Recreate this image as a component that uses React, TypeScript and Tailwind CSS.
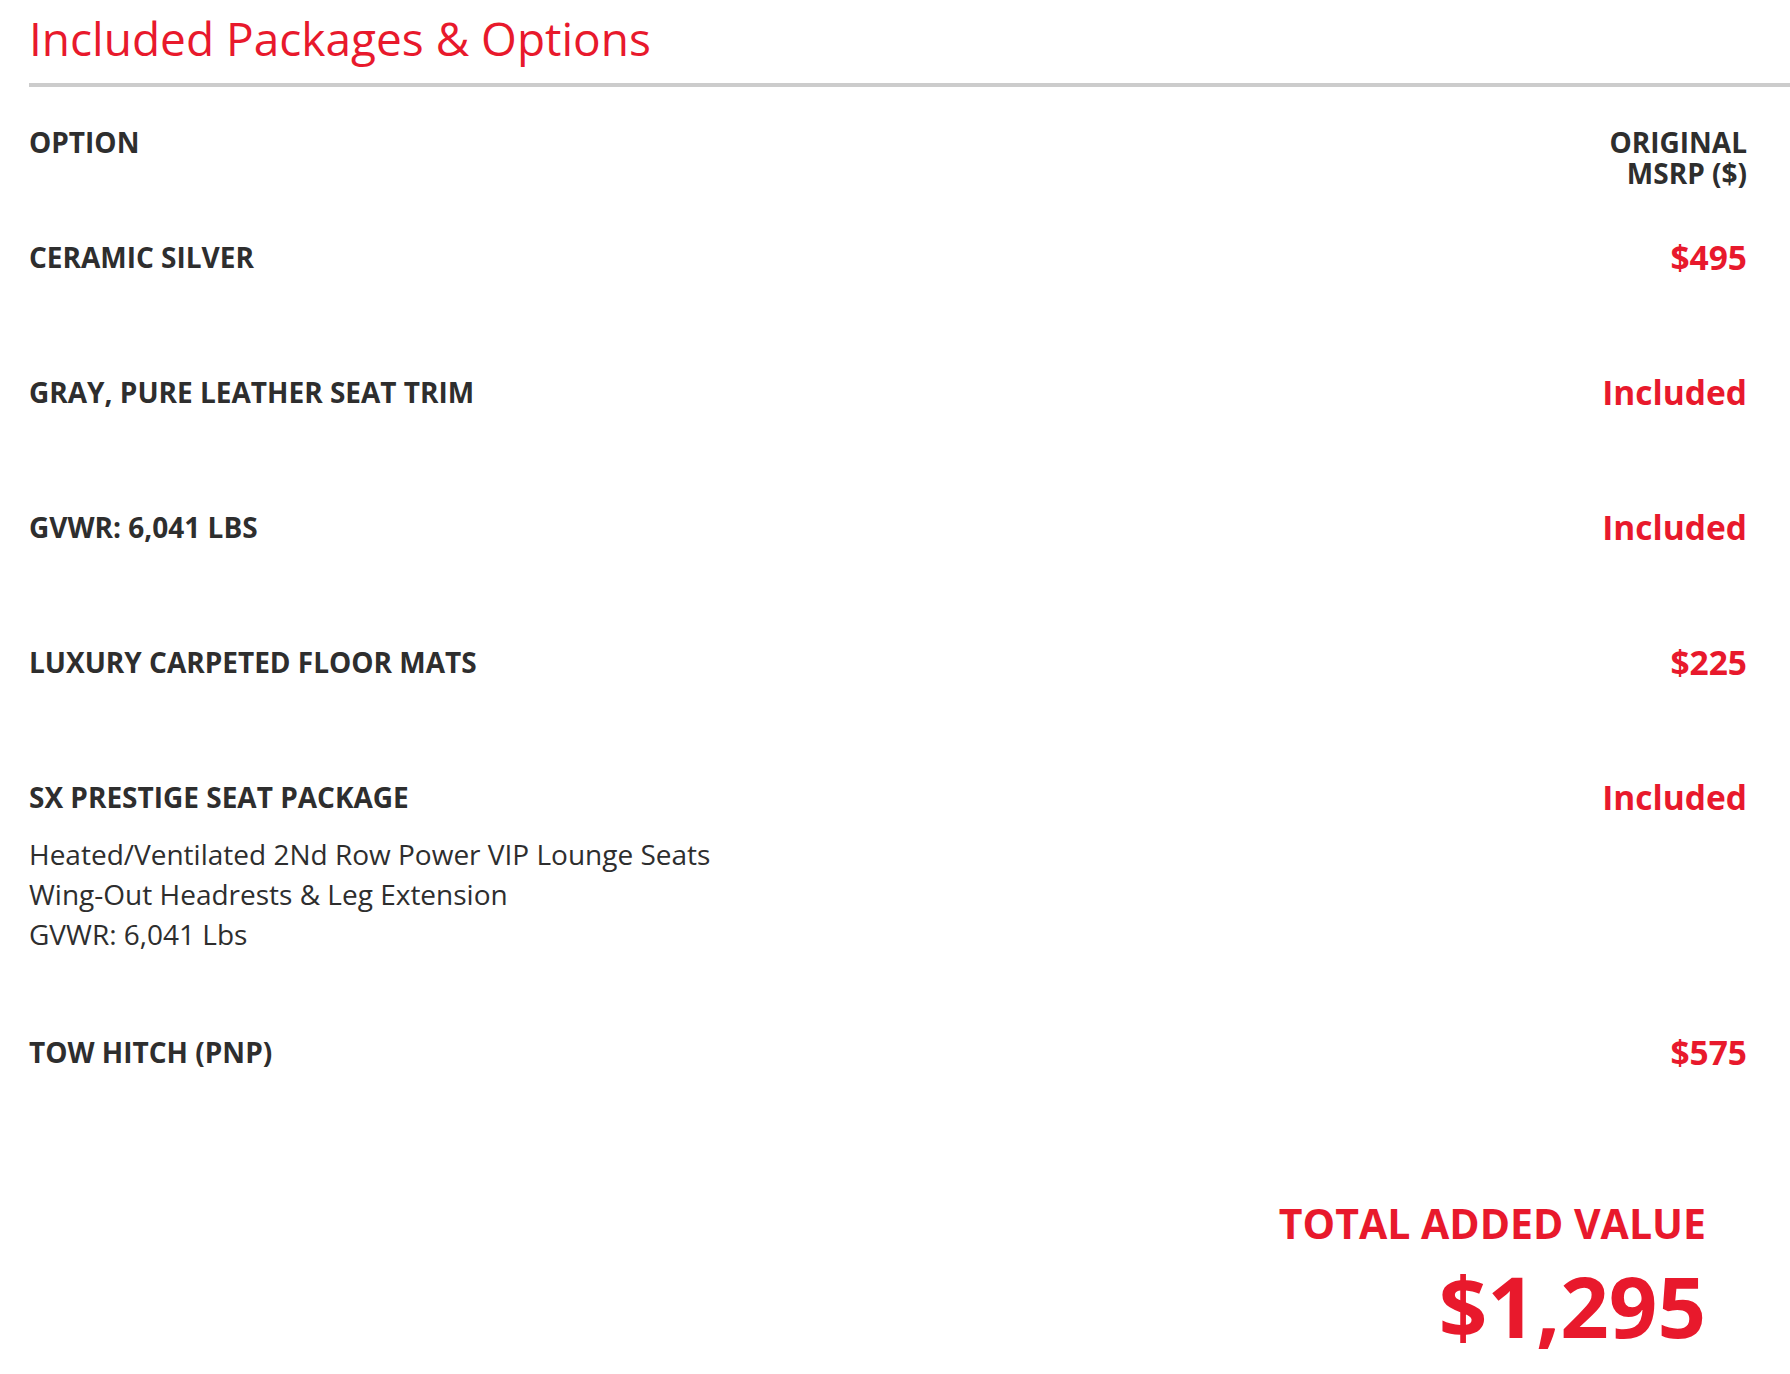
import React from "react";

const rows: { label: string; price: string; desc?: string[] }[] = [
  { label: "CERAMIC SILVER", price: "$495" },
  { label: "GRAY, PURE LEATHER SEAT TRIM", price: "Included" },
  { label: "GVWR: 6,041 LBS", price: "Included" },
  { label: "LUXURY CARPETED FLOOR MATS", price: "$225" },
  {
    label: "SX PRESTIGE SEAT PACKAGE",
    price: "Included",
    desc: [
      "Heated/Ventilated 2Nd Row Power VIP Lounge Seats",
      "Wing-Out Headrests & Leg Extension",
      "GVWR: 6,041 Lbs",
    ],
  },
  { label: "TOW HITCH (PNP)", price: "$575" },
];

export default function App() {
  return (
    <div
      className="w-[1790px] h-[1374px] bg-white overflow-hidden pl-[29px]"
      style={{ fontFamily: '"Open Sans", "Noto Sans", sans-serif' }}
    >
      <h1 className="pt-[10px] text-[46px] leading-[56px] font-normal text-[#e8192c]">
        Included Packages &amp; Options
      </h1>
      <div className="mt-[17px] h-[4px] bg-[#cccccc]" />
      <div className="pr-[43px] text-[#2e2e2e]">
        <div className="mt-[40px] flex justify-between items-start text-[28px] leading-[31px] font-bold">
          <div>OPTION</div>
          <div className="text-right">
            ORIGINAL
            <br />
            MSRP ($)
          </div>
        </div>
        <div className="mt-[10px]">
          {rows.map((r) => (
            <div key={r.label} className="flex justify-between items-start pt-[40px] pb-[40px]">
              <div>
                <div className="text-[28px] leading-[36px] font-bold">{r.label}</div>
                <div className="mt-[19px] text-[28px] leading-[40px] font-normal">
                  {r.desc?.map((d) => (
                    <div key={d}>{d}</div>
                  ))}
                </div>
              </div>
              <div className="text-[33.5px] leading-[36px] font-bold text-[#e8192c] text-right">
                {r.price}
              </div>
            </div>
          ))}
        </div>
        <div className="flex justify-end pr-[41px] mt-[70px]">
          <div className="text-right text-[#e8192c] font-bold">
            <div className="text-[41px] leading-[48px]">TOTAL ADDED VALUE</div>
            <div className="mt-[18px] text-[85px] leading-[80px]">$1,295</div>
          </div>
        </div>
      </div>
    </div>
  );
}
